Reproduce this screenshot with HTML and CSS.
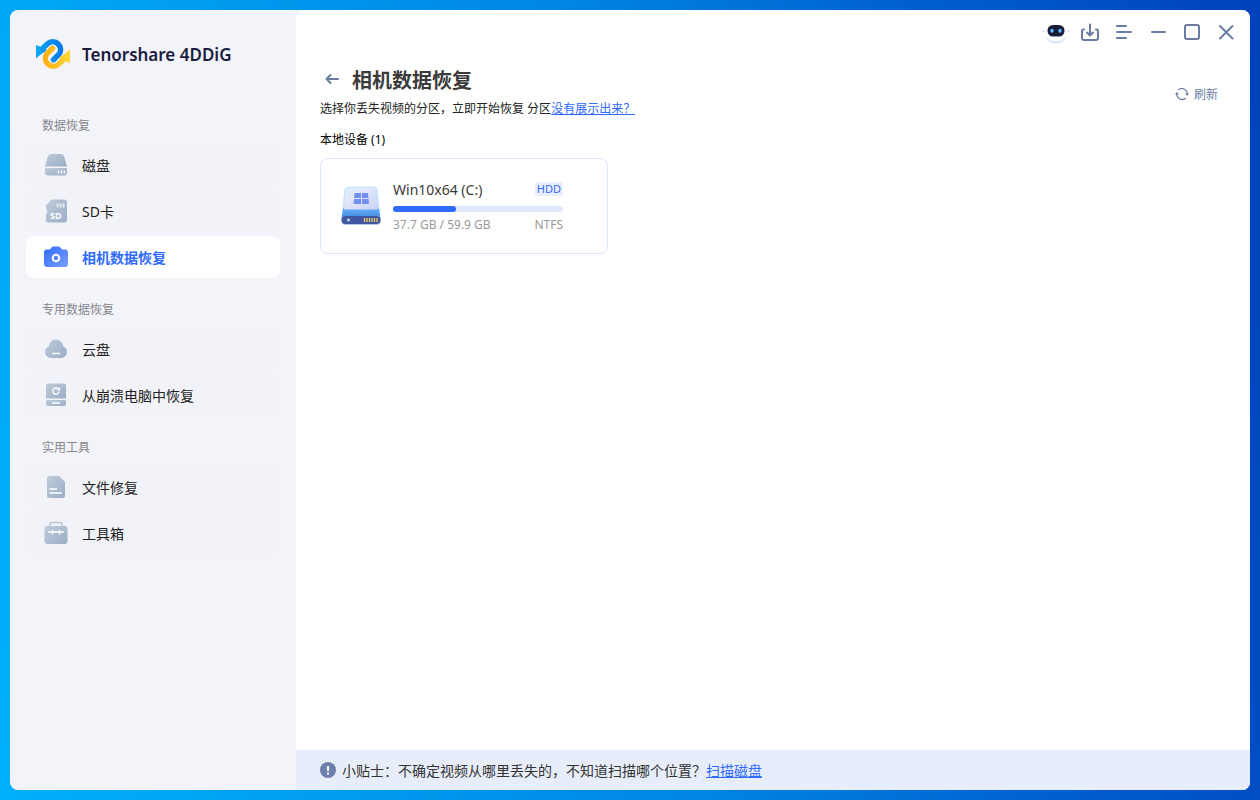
FILE: index.html
```
<!DOCTYPE html>
<html lang="zh-CN">
<head>
  <meta charset="UTF-8">
  <title>Tenorshare 4DDiG</title>
  <link rel="stylesheet" href="styles.css">
</head>
<body>
  <!-- shared gradients -->
  <svg class="defs" aria-hidden="true">
    <defs>
      <linearGradient id="gray" x1="0" y1="0" x2="1" y2="1">
        <stop offset="0" stop-color="#c0cbda"/>
        <stop offset="1" stop-color="#9badc6"/>
      </linearGradient>
      <linearGradient id="blue" x1="0" y1="0" x2="1" y2="1">
        <stop offset="0" stop-color="#2f6bff"/>
        <stop offset="1" stop-color="#7c9eff"/>
      </linearGradient>
    </defs>
  </svg>

  <div class="window">
    <aside class="sidebar">
      <div class="brand">
        <svg width="34" height="34" viewBox="0 0 34 34">
          <defs>
            <linearGradient id="logoBlue" gradientUnits="userSpaceOnUse" x1="0" y1="0" x2="27" y2="0">
              <stop offset="0" stop-color="#12a8f6"/>
              <stop offset="1" stop-color="#0077ea"/>
            </linearGradient>
            <linearGradient id="logoYellow" gradientUnits="userSpaceOnUse" x1="7" y1="0" x2="34" y2="0">
              <stop offset="0" stop-color="#ffae12"/>
              <stop offset="1" stop-color="#ffd636"/>
            </linearGradient>
          </defs>
          <path d="M0 8l5 2 5-4v8l-6 4-4 3.500z" fill="url(#logoBlue)"/>
          <path d="M6 12l5.500-5.200a7.800 7.800 0 0 1 11.300 10.700l-5.300 5.200" fill="none" stroke="url(#logoBlue)" stroke-width="5.500" stroke-linecap="round"/>
          <path d="M34 26l-5-2-5 4v-8l6-4 4-3.500z" fill="url(#logoYellow)"/>
          <path d="M28 22l-5.500 5.200a7.800 7.800 0 0 1-11.300-10.700l5.300-5.200" fill="none" stroke="url(#logoYellow)" stroke-width="5.500" stroke-linecap="round"/>
        </svg>
        <span>Tenorshare 4DDiG</span>
      </div>

      <nav>
        <h2>数据恢复</h2>
        <button class="item">
          <svg width="24" height="24" viewBox="0 0 24 24">
            <path d="M7 1h10q2.500 0 3.200 2.500L23 13.500H1L3.800 3.500Q4.500 1 7 1z" fill="url(#gray)"/>
            <path d="M1 15h22v4.500q0 3-3 3H4q-3 0-3-3z" fill="url(#gray)"/>
            <path d="M14.500 17.500v3M17.500 17.500v3M20.500 17.500v3" stroke="#f3f5fa" stroke-width="1.600"/>
          </svg>
          磁盘
        </button>
        <button class="item">
          <svg width="24" height="24" viewBox="0 0 24 24">
            <path d="M7.500.5H20q3 0 3 3v17q0 3-3 3H4.500q-2.500 0-2.500-2.500v-6l1-1v-3l-1-1V6.500z" fill="url(#gray)"/>
            <path d="M13.500 4.500v4M16.500 4.500v4M19.500 4.500v4" stroke="#e8edf4" stroke-width="1.800"/>
            <text x="6" y="20" class="sd">SD</text>
          </svg>
          SD卡
        </button>
        <button class="item active">
          <svg width="24" height="24" viewBox="0 0 24 24">
            <path d="M3 4.500h3L7.500 2.500q.7-1 2-1h5q1.300 0 2 1L18 4.500h3q3 0 3 3V19q0 3-3 3H3q-3 0-3-3V7.500q0-3 3-3z" fill="url(#blue)"/>
            <circle cx="12" cy="13" r="3.300" fill="none" stroke="#fff" stroke-width="2"/>
          </svg>
          相机数据恢复
        </button>

        <h2>专用数据恢复</h2>
        <button class="item">
          <svg width="24" height="24" viewBox="0 0 24 24">
            <path d="M12 2.500c4 0 7 3 7 6.500 2.500 1 4 3 4 5.500 0 4-3 6.500-6.500 6.500h-9C4 21 1 18.500 1 14.500 1 12 2.500 10 5 9c0-3.500 3-6.500 7-6.500z" fill="url(#gray)"/>
            <path d="M8 16.500h8" stroke="#fff" stroke-width="1.500"/>
          </svg>
          云盘
        </button>
        <button class="item">
          <svg width="24" height="24" viewBox="0 0 24 24">
            <path d="M4 .5h16q2 0 2 2v13H2v-13q0-2 2-2z" fill="url(#gray)"/>
            <path d="M2 17h20v4q0 2-2 2H4q-2 0-2-2z" fill="url(#gray)"/>
            <path d="M8 20h8" stroke="#fff" stroke-width="1.500"/>
            <path d="M14.200 6A3.100 3.100 0 1 0 15 8.500" fill="none" stroke="#fff" stroke-width="1.400"/>
            <path d="M12.500 7.500H16V4z" fill="#fff"/>
          </svg>
          从崩溃电脑中恢复
        </button>

        <h2>实用工具</h2>
        <button class="item">
          <svg width="24" height="24" viewBox="0 0 24 24">
            <path d="M5.500 1H15l6 6v13.500q0 2.500-2.500 2.500h-13Q3 23 3 20.500v-17Q3 1 5.500 1z" fill="url(#gray)"/>
            <path d="M5.500 14H13M5.500 18H18" stroke="#fff" stroke-width="1.600"/>
          </svg>
          文件修复
        </button>
        <button class="item">
          <svg width="24" height="24" viewBox="0 0 24 24">
            <path d="M6 5V3q0-1.500 1.500-1.500h9Q18 1.500 18 3v2" fill="none" stroke="#b9c5d5" stroke-width="1.500"/>
            <rect x=".5" y="5" width="23" height="18" rx="3" fill="url(#gray)"/>
            <path d="M4 11h16M8.500 9v4.500M15.500 9v4.500" stroke="#fff" stroke-width="1.300"/>
          </svg>
          工具箱
        </button>
      </nav>
    </aside>

    <main>
      <div class="titlebar">
        <button class="assistant" aria-label="助手">
          <svg width="28" height="24" viewBox="0 0 28 24">
            <path d="M1 10.500l3 3M27 10.500l-3 3" stroke="#c3d8ff" stroke-width="2"/>
            <circle cx="14" cy="12.500" r="11" fill="#cfe0ff"/>
            <ellipse cx="14" cy="10.500" rx="12" ry="11" fill="#fff"/>
            <rect x="5.500" y="5" width="17" height="11.500" rx="5.500" fill="#171c3d"/>
            <ellipse cx="10" cy="10.800" rx="1.700" ry="2" fill="#62baff"/>
            <ellipse cx="18" cy="10.800" rx="1.700" ry="2" fill="#62baff"/>
          </svg>
        </button>
        <button aria-label="下载">
          <svg class="line" width="20" height="20" viewBox="0 0 20 20">
            <path d="M4 7.500H3.500Q2 7.500 2 9v7q0 2 2 2h12q2 0 2-2V9q0-1.500-1.500-1.500H16M10 2.500V13M7 10.500l3 3 3-3"/>
          </svg>
        </button>
        <button aria-label="菜单">
          <svg class="line" width="20" height="20" viewBox="0 0 20 20">
            <path d="M3 4h9M3 10h14M3 16h9"/>
          </svg>
        </button>
        <button aria-label="最小化">
          <svg class="line" width="20" height="20" viewBox="0 0 20 20">
            <path d="M4 10h13"/>
          </svg>
        </button>
        <button aria-label="最大化">
          <svg class="line" width="20" height="20" viewBox="0 0 20 20">
            <rect x="3" y="3" width="14" height="14" rx="2"/>
          </svg>
        </button>
        <button aria-label="关闭">
          <svg class="line" width="20" height="20" viewBox="0 0 20 20">
            <path d="M4 4l12.500 12.500M16.500 4L4 16.500"/>
          </svg>
        </button>
      </div>

      <section class="content">
        <header>
          <div>
            <div class="heading">
              <button aria-label="返回">
                <svg class="line" width="16" height="16" viewBox="0 0 16 16">
                  <path d="M14 8H2.500M6.500 4l-4 4 4 4"/>
                </svg>
              </button>
              <h1>相机数据恢复</h1>
            </div>
            <p>选择你丢失视频的分区，立即开始恢复 分区<a href="#">没有展示出来？</a></p>
          </div>
          <button class="refresh">
            <svg width="14" height="14" viewBox="0 0 14 14">
              <path d="M3.200 3A5.400 5.400 0 0 1 12.300 7M1.700 7A5.400 5.400 0 0 0 10.800 11" fill="none" stroke="#6b7ba6" stroke-width="1.200"/>
              <path d="M10 6.500h4L12.200 9zM0 7.500h4L1.800 5z" fill="#6b7ba6"/>
            </svg>
            刷新
          </button>
        </header>

        <h3>本地设备 (1)</h3>
        <button class="drive">
          <svg width="40" height="40" viewBox="0 0 40 40">
            <defs>
              <linearGradient id="driveTop" x1="0" y1="0" x2="1" y2="1">
                <stop offset="0" stop-color="#d6eefc"/>
                <stop offset=".3" stop-color="#e3e8fb"/>
                <stop offset="1" stop-color="#c9d2f5"/>
              </linearGradient>
              <linearGradient id="driveSide" x1="0" y1="0" x2="0" y2="1">
                <stop offset="0" stop-color="#67b2f7"/>
                <stop offset="1" stop-color="#3e85e2"/>
              </linearGradient>
            </defs>
            <path d="M8 .5h24q4 0 4.800 4.500L39 29H1L3.200 5Q4 .5 8 .5z" fill="#c3e5fc"/>
            <path d="M9 1.500h22q4 0 4.500 4L37 24H3L4.500 5.500q.5-4 4.500-4z" fill="url(#driveTop)"/>
            <path d="M2 22q1 1.500 4 1.500h28q3 0 4-1.500l1.500 11H.5z" fill="url(#driveSide)"/>
            <rect x=".5" y="30" width="39" height="9" rx="4" fill="#b9c8ef"/>
            <rect x=".5" y="30" width="39" height="8" rx="4" fill="#40569f"/>
            <circle cx="7.500" cy="34" r="1.500" fill="#aee1ff"/>
            <path d="M23.500 32v4M26 32v4M28.500 32v4M31 32v4M33.500 32v4M36 32v4" stroke="#f5ca68" stroke-width="1.300"/>
            <path d="M13.500 7H20v5h-7zM21 7h6l.5 5H21zM13 13h7v5h-7.500zM21 13h6.500l.5 5h-7z" fill="#718ff0"/>
          </svg>
          <span class="info">
            <span class="row name">Win10x64 (C:)<span class="tag">HDD</span></span>
            <span class="bar"><span class="used" style="width: 37%"></span></span>
            <span class="row size">37.7 GB / 59.9 GB<span>NTFS</span></span>
          </span>
        </button>
      </section>

      <footer>
        <svg width="16" height="16" viewBox="0 0 16 16">
          <circle cx="8" cy="8" r="8" fill="#6f7fab"/>
          <path d="M8 4v5M8 10.500v2" stroke="#fff" stroke-width="2"/>
        </svg>
        <p>小贴士：不确定视频从哪里丢失的，不知道扫描哪个位置？<a href="#">扫描磁盘</a></p>
      </footer>
    </main>
  </div>
</body>
</html>
```
FILE: styles.css
```
* {
  box-sizing: border-box;
}

body {
  margin: 0;
  padding: 10px;
  height: 100vh;
  font-family: "Noto Sans", "Noto Sans CJK SC", sans-serif;
  font-size: 14px;
  color: #222;
  background: linear-gradient(80deg, #00b0fa, #009cf0 25%, #0086e4 50%, #0060ce 75%, #0042ba);
}

h1, h2, h3, p {
  margin: 0;
}

button {
  border: none;
  padding: 0;
  background: none;
  font: inherit;
  color: inherit;
  cursor: pointer;
}

svg {
  display: block;
  flex-shrink: 0;
}

a {
  color: #2f6bff;
}

.defs {
  position: absolute;
  width: 0;
  height: 0;
}

.window {
  display: flex;
  height: 100%;
  border-radius: 8px;
  overflow: hidden;
  background: #f3f4fa;
}

/* sidebar */
.sidebar {
  width: 286px;
  flex-shrink: 0;
  padding: 26px 16px;
}

.brand {
  display: flex;
  align-items: center;
  gap: 12px;
  height: 36px;
  padding-left: 10px;
  margin-bottom: 36px;
  font-size: 17px;
  font-weight: 600;
  color: #1b1b3f;
}

nav h2 {
  height: 36px;
  line-height: 36px;
  padding-left: 16px;
  font-size: 12px;
  font-weight: 400;
  color: #85878c;
}

.item {
  display: flex;
  align-items: center;
  gap: 14px;
  width: 100%;
  height: 42px;
  margin-bottom: 4px;
  padding-left: 18px;
  border-radius: 8px;
  background: #f2f3f8;
}

.item + h2 {
  margin-top: 14px;
}

.item.active {
  background: #fff;
  color: #2f6bff;
  font-weight: 700;
}

.sd {
  font-size: 9px;
  font-weight: 700;
  fill: #fff;
}

/* main area */
main {
  flex: 1;
  display: flex;
  flex-direction: column;
  background: #fff;
  border-radius: 8px 0 0 0;
}

.titlebar {
  display: flex;
  justify-content: flex-end;
  gap: 14px;
  height: 44px;
  padding-right: 14px;
}

.titlebar .assistant {
  margin-right: -4px;
}

.line {
  fill: none;
  stroke: #6b7ba6;
  stroke-width: 2;
  stroke-linecap: round;
  stroke-linejoin: round;
}

.content {
  flex: 1;
  padding: 8px 32px 0 24px;
}

.content header {
  display: flex;
  justify-content: space-between;
  align-items: center;
}

.heading {
  display: flex;
  align-items: center;
  gap: 12px;
  height: 34px;
  padding-left: 4px;
}

h1 {
  font-size: 20px;
  color: #3b3b3b;
}

header p {
  font-size: 12px;
  line-height: 26px;
}

.refresh {
  display: flex;
  align-items: center;
  gap: 5px;
  margin-top: 4px;
  font-size: 12px;
  color: #6b7ba6;
}

h3 {
  margin: 8px 0;
  font-size: 12px;
  line-height: 20px;
  font-weight: 400;
  color: #000;
}

.drive {
  display: flex;
  align-items: center;
  gap: 12px;
  width: 288px;
  height: 96px;
  padding: 0 44px 0 20px;
  border: 1px solid #dbe5ff;
  border-radius: 8px;
  text-align: left;
}

.info {
  flex: 1;
}

.row {
  display: flex;
  justify-content: space-between;
  align-items: center;
}

.name {
  height: 22px;
  color: #3b3b3b;
}

.tag {
  padding: 0 2px;
  border-radius: 2px;
  background: #e8eefd;
  font-size: 11px;
  line-height: 14px;
  color: #2f6bff;
}

.bar {
  display: block;
  height: 6px;
  margin: 6px 0 4px;
  border-radius: 3px;
  background: #e0e8ff;
}

.used {
  display: block;
  height: 100%;
  border-radius: 3px;
  background: #2f6bff;
}

.size {
  font-size: 12px;
  line-height: 18px;
  color: #999;
}

footer {
  display: flex;
  align-items: center;
  gap: 6px;
  height: 40px;
  padding-left: 24px;
  background: #e7edfa;
}

footer p {
  color: #333;
}
```
